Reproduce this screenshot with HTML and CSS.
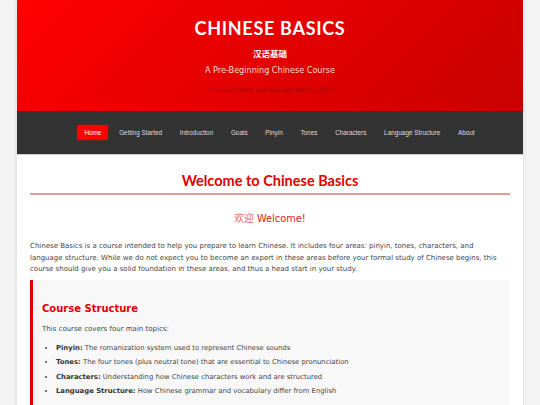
FILE: index.html
```html
<!DOCTYPE html>
<html lang="en">
<head>
<meta charset="utf-8">
<title>Chinese Basics</title>
<link rel="stylesheet" href="styles.css">
</head>
<body>
<div class="page">
  <header class="masthead">
    <h1 class="site-title">CHINESE BASICS</h1>
    <div class="site-cn">汉语基础</div>
    <div class="site-sub">A Pre-Beginning Chinese Course</div>
    <div class="site-updated">Course content last updated March, 2012</div>
  </header>
  <nav class="mainnav">
    <ul class="navlist">
      <li><a class="navlink active" href="#">Home</a></li>
      <li><a class="navlink" href="#">Getting Started</a></li>
      <li><a class="navlink" href="#">Introduction</a></li>
      <li><a class="navlink" href="#">Goals</a></li>
      <li><a class="navlink" href="#">Pinyin</a></li>
      <li><a class="navlink" href="#">Tones</a></li>
      <li><a class="navlink" href="#">Characters</a></li>
      <li><a class="navlink" href="#">Language Structure</a></li>
      <li><a class="navlink" href="#">About</a></li>
    </ul>
  </nav>
  <main class="content">
    <h2 class="page-title">Welcome to Chinese Basics</h2>
    <h3 class="welcome"><span class="welcome-cn">欢迎</span> Welcome!</h3>
    <p class="intro">Chinese Basics is a course intended to help you prepare to learn Chinese. It includes four areas: pinyin, tones, characters, and language structure. While we do not expect you to become an expert in these areas before your formal study of Chinese begins, this course should give you a solid foundation in these areas, and thus a head start in your study.</p>
    <section class="card">
      <h3 class="card-title">Course Structure</h3>
      <p class="card-text">This course covers four main topics:</p>
      <ul class="topics">
        <li><strong>Pinyin:</strong> The romanization system used to represent Chinese sounds</li>
        <li><strong>Tones:</strong> The four tones (plus neutral tone) that are essential to Chinese pronunciation</li>
        <li><strong>Characters:</strong> Understanding how Chinese characters work and are structured</li>
        <li><strong>Language Structure:</strong> How Chinese grammar and vocabulary differ from English</li>
      </ul>
    </section>
  </main>
</div>
</body>
</html>
```

FILE: styles.css
```css
html, body {
  margin: 0;
  padding: 0;
}
body {
  background: #f4f4f4;
  font-family: "DejaVu Sans", Verdana, sans-serif;
  color: #444;
}
.page {
  width: 506px;
  margin: 0 auto;
  background: #fff;
  box-shadow: 0 0 5px rgba(0, 0, 0, 0.12);
  min-height: 405px;
}
.masthead {
  height: 111px;
  box-sizing: border-box;
  padding-top: 17px;
  background: linear-gradient(135deg, #ff0000 0%, #c80000 100%);
  display: flex;
  flex-direction: column;
  align-items: center;
  color: #fff;
  text-align: center;
}
.site-title {
  margin: 0;
  font-family: "Comic Sans MS", "Lato", sans-serif;
  font-weight: bold;
  font-size: 18px;
  line-height: 22px;
  letter-spacing: 0.7px;
}
.site-cn {
  margin-top: 8px;
  font-family: "Noto Sans CJK SC", sans-serif;
  font-weight: bold;
  font-size: 8.5px;
  line-height: 12px;
}
.site-sub {
  margin-top: 6px;
  font-size: 8.1px;
  line-height: 11px;
  color: rgba(255, 235, 235, 0.92);
}
.site-updated {
  margin-top: 9px;
  font-size: 6px;
  line-height: 9px;
  font-style: italic;
  color: #921414;
}
.mainnav {
  height: 44px;
  box-sizing: border-box;
  background: #333;
  border-bottom: 1px solid #cfcfcf;
  display: flex;
  align-items: center;
  justify-content: center;
}
.navlist {
  list-style: none;
  margin: 0;
  padding: 0 0 0 19px;
  display: flex;
  gap: 3.7px;
}
.navlink {
  display: block;
  padding: 4px 7px;
  font-family: "Liberation Sans", Arial, sans-serif;
  font-size: 6.4px;
  line-height: 7px;
  color: #ddd;
  text-decoration: none;
  border-radius: 2px;
}
.navlink.active {
  background: #f00;
  color: #fff;
  box-shadow: 0 0 2px rgba(255, 0, 0, 0.6);
}
.content {
  padding: 16px 13px 0;
}
.page-title {
  margin: 0;
  padding-bottom: 2px;
  border-bottom: 2px solid #e89999;
  text-align: center;
  font-family: "Comic Sans MS", "Lato", sans-serif;
  font-weight: bold;
  font-size: 14.5px;
  line-height: 20px;
  color: #e00000;
}
.welcome {
  margin: 16px 0 0;
  text-align: center;
  font-weight: normal;
  font-size: 9.8px;
  line-height: 14px;
  color: #d81e1e;
}
.welcome-cn {
  font-family: "Noto Sans CJK SC", sans-serif;
  color: #e66a6a;
}
.intro {
  margin: 15px 0 0;
  padding-right: 3px;
  font-size: 7px;
  line-height: 11.5px;
}
.card {
  margin-top: 4px;
  background: #f8f8f8;
  border-left: 3px solid #e00000;
  padding: 22px 12px 14px 9px;
}
.card-title {
  margin: 0;
  font-size: 10px;
  line-height: 14px;
  font-weight: bold;
  color: #e00000;
}
.card-text {
  margin: 8px 0 0;
  font-size: 7px;
  line-height: 11.5px;
}
.topics {
  margin: 7.5px 0 0;
  padding-left: 14px;
  font-size: 6.85px;
  line-height: 11.5px;
}
.topics li {
  margin-bottom: 3px;
}
.topics strong {
  color: #333;
}
```
